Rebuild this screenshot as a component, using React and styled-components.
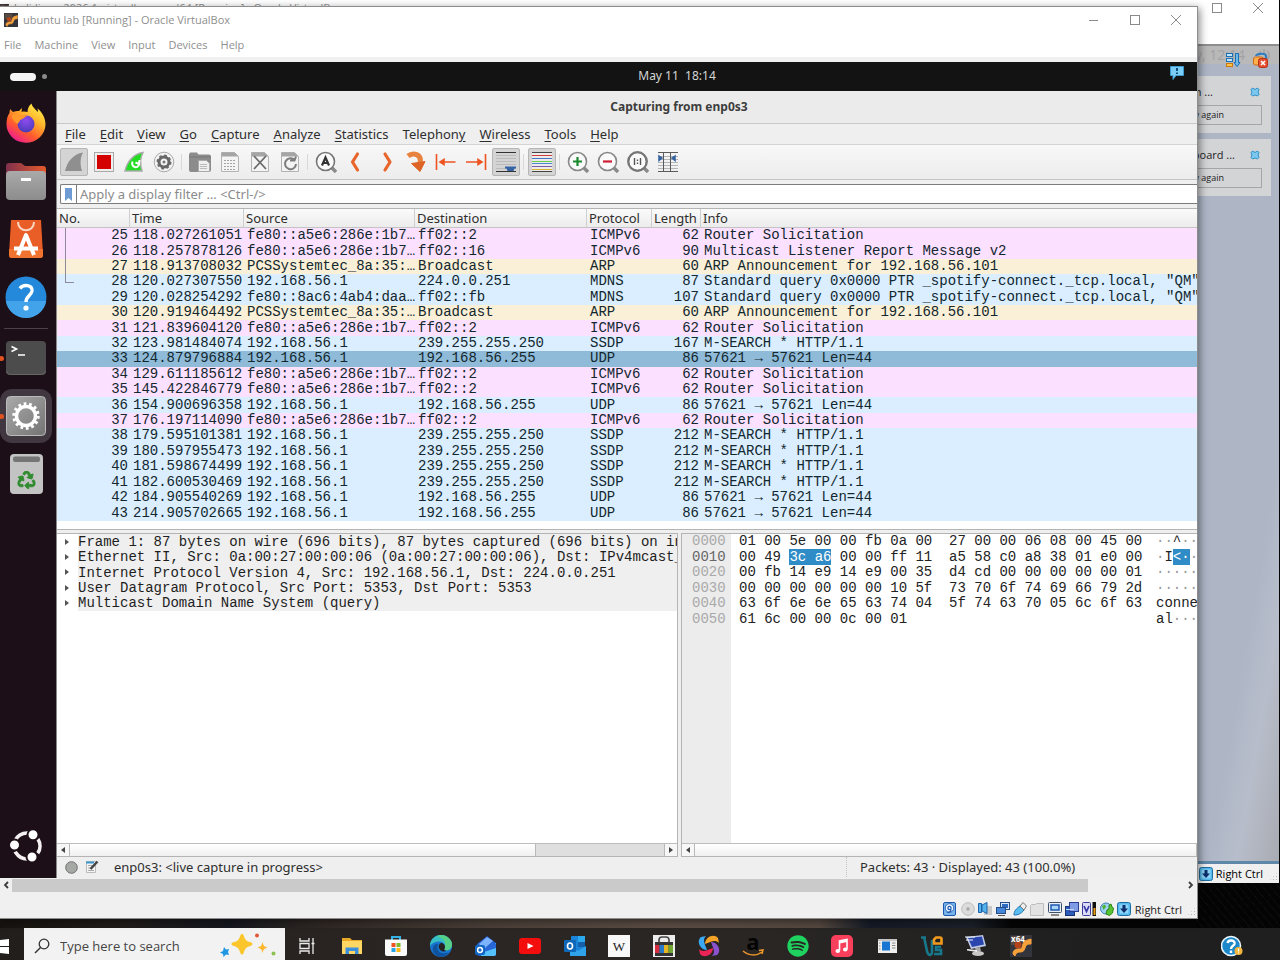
import React, { useState } from "react";
import styled, { createGlobalStyle, css } from "styled-components";
import { FaRecycle, FaSpotify } from "react-icons/fa";

const GlobalStyle = createGlobalStyle`
  * {
    box-sizing: border-box;
  }
  body {
    margin: 0;
    overflow: hidden;
    font-family: "Open Sans", "Noto Sans", sans-serif;
    font-size: 11px;
  }
  button {
    font: inherit;
    color: inherit;
    background: none;
    border: none;
    padding: 0;
    margin: 0;
  }
  svg {
    display: block;
    flex: none;
  }
`;

const ubuntuFont = `"Noto Sans", "Open Sans", sans-serif`;
const mono = css`
  font-family: "Liberation Mono", monospace;
  font-size: 14px;
`;

/* ---------- desktop ---------- */

const Screen = styled.div`
  display: flex;
  flex-direction: column;
  height: 100vh;
  overflow: hidden;
  background: #000;
`;

const Desktop = styled.main`
  position: relative;
  flex: 1;
  min-height: 0;
  background: linear-gradient(
    90deg,
    #17140f 0%,
    #201c1a 10%,
    #14171f 18%,
    #2c2522 24%,
    #4a3f38 38%,
    #5a4c44 52%,
    #54473f 64%,
    #141a26 68%,
    #1b2029 76%,
    #050505 79%,
    #050505 100%
  );
`;

const Stripes = styled.div`
  position: absolute;
  right: 0;
  bottom: 0;
  width: 84px;
  height: 46px;
  background: repeating-linear-gradient(50deg, #040404 0 5px, #0b0b0b 5px 6px);
`;

const Window = styled.section`
  position: absolute;
  display: flex;
  flex-direction: column;
  overflow: hidden;
  background: #f0f0f0;
`;

const BackWindow = styled(Window)`
  inset: 0 1px 45px 0;
`;

const FrontWindow = styled(Window)`
  inset: 7px 83px 10px 0;
  overflow: visible;
  box-shadow: 0 0 0 1px #8d8d8d, 2px 2px 8px 1px rgba(0, 0, 0, 0.45);
`;

const TitleBar = styled.header`
  display: flex;
  align-items: center;
  flex: none;
  height: 26px;
  padding: 0 12px 0 4px;
  gap: 5px;
  background: #fff;
  color: #8f8f8f;
  ${(props) =>
    props.$back &&
    css`
      height: 44px;
      padding: 0 12px 28px 0;
    `}
`;

const WindowTitle = styled.h1`
  flex: 1;
  margin: 0;
  font-size: 11px;
  font-weight: 400;
  line-height: 16px;
  white-space: nowrap;
`;

const WindowButtons = styled.div`
  display: flex;
  gap: 23px;
`;

const VBoxMenu = styled.nav`
  display: flex;
  flex: none;
  height: 24px;
  padding: 0 4px;
  gap: 13px;
  background: #fff;
  color: #8f8f8f;
  button {
    line-height: 24px;
  }
`;

const Ledge = styled.div`
  flex: none;
  height: 5px;
  background: #f0f0f0;
`;

/* ---------- window behind ---------- */

const BackGuest = styled.div`
  flex: 1;
  display: flex;
  flex-direction: column;
  align-items: flex-end;
  gap: 6px;
  border-top: 2px solid #8e8e8e;
  border-bottom: 3px solid #5f88a8;
  background: linear-gradient(
    100deg,
    #aeb6c6 0%,
    #aeb6c6 95%,
    #b7bdca 97%,
    #a9abb2 100%
  );
`;

const BackBar = styled.div`
  display: flex;
  align-items: center;
  justify-content: flex-end;
  width: 100%;
  height: 18px;
  padding-right: 8px;
  gap: 12px;
  background: #b9b9ba;
  color: #a2a2a4;
  font-size: 14px;
  line-height: 16px;
`;

const BackTools = styled.div`
  position: absolute;
  top: 52px;
  right: 11px;
  display: flex;
  gap: 11px;
`;

const Notice = styled.article`
  width: 280px;
  margin: ${(props) => (props.$first ? "6px 8px 0 0" : "0 8px 0 0")};
  padding: 8px 9px 8px 0;
  background: #d3d4d6;
  color: #222;
`;

const NoticeHead = styled.div`
  display: flex;
  justify-content: space-between;
  align-items: flex-start;
  height: 21px;
  padding: 0 2px 0 0;
  line-height: 16px;
  span {
    flex: 1;
    padding-right: ${(props) => props.$gap};
    text-align: right;
  }
  button {
    padding-top: 3px;
  }
`;

const NoticeButton = styled.button`
  display: block;
  width: 100%;
  height: 20px;
  padding-right: 37px;
  border: 1px solid #a6a6a6;
  font-size: 9px;
  line-height: 18px;
  text-align: right;
`;

const BackStatus = styled.footer`
  display: flex;
  align-items: center;
  justify-content: flex-end;
  flex: none;
  height: 19px;
  padding-right: 1px;
  gap: 3px;
  font-size: 11px;
`;

/* ---------- guest shell ---------- */

const Guest = styled.div`
  flex: 1;
  display: flex;
  flex-direction: column;
  min-height: 0;
  font-family: ${ubuntuFont};
`;

const TopPanel = styled.div`
  display: grid;
  grid-template-columns: 1fr auto 1fr;
  flex: none;
  height: 29px;
  padding: 0 13px 0 10px;
  background: #131313;
  color: #d6d6d6;
  font-size: 12px;
  line-height: 27px;
  white-space: pre;
`;

const Clock = styled.time`
  padding-left: 160px;
`;

const Workspaces = styled.div`
  display: flex;
  align-items: center;
  gap: 6px;
  &::before {
    content: "";
    width: 26px;
    height: 8px;
    border-radius: 4px;
    background: #f4f4f4;
  }
  &::after {
    content: "";
    width: 5px;
    height: 5px;
    border-radius: 50%;
    background: #8a8a8a;
  }
`;

const PanelEnd = styled.div`
  display: flex;
  justify-content: flex-end;
  padding-top: 4px;
`;

const Session = styled.div`
  flex: 1;
  display: flex;
  min-height: 0;
`;

const Dock = styled.nav`
  display: flex;
  flex-direction: column;
  flex: none;
  width: 56px;
  padding: 3px 4px 3px 0;
  background: #1c0f17;
`;

const DockRule = styled.hr`
  width: 44px;
  height: 1px;
  margin: 2px auto 0;
  border: none;
  background: #4a4047;
`;

const DockButton = styled.button`
  position: relative;
  display: flex;
  align-items: center;
  justify-content: center;
  height: 54px;
  margin: 2px 0;
  border-radius: 12px;
  background: ${(props) => (props.$active ? "#413740" : "none")};
  ${(props) =>
    props.$running &&
    css`
      &::before {
        content: "";
        position: absolute;
        left: -1px;
        top: 25px;
        width: 5px;
        height: 5px;
        border-radius: 50%;
        background: #e2521f;
      }
    `}
  &:last-child {
    margin-top: auto;
  }
`;

/* ---------- wireshark ---------- */

const Shark = styled.div`
  flex: 1;
  display: flex;
  flex-direction: column;
  min-width: 0;
  border-left: 1px solid #8b888a;
  background: #efefef;
  color: #2e2e2e;
  font-size: 13px;
`;

const SharkTitle = styled.h2`
  flex: none;
  height: 33px;
  margin: 0;
  padding-left: 104px;
  border-bottom: 1px solid #c9c9c9;
  background: #ebebeb;
  color: #3d3d3d;
  font-size: 12px;
  font-weight: 700;
  line-height: 32px;
  text-align: center;
`;

const SharkMenu = styled.nav`
  display: flex;
  flex: none;
  height: 21px;
  padding: 0 8px;
  gap: 14px;
  border-bottom: 1px solid #d4d4d4;
  line-height: 19px;
  u {
    text-underline-offset: 2px;
    text-decoration-thickness: 1px;
  }
`;

const Toolbar = styled.div`
  display: flex;
  align-items: center;
  flex: none;
  gap: 2px;
  height: 35px;
  padding: 0 3px;
  border-bottom: 1px solid #c4c4c4;
  background: linear-gradient(#f8f8f8, #ececec);
`;

const Tool = styled.button`
  display: flex;
  align-items: center;
  justify-content: center;
  width: 28px;
  height: 28px;
  border: 1px solid ${(props) => (props.$on ? "#b5b5b5" : "transparent")};
  border-radius: 2px;
  background: ${(props) => (props.$on ? "#d4d4d4" : "none")};
`;

const ToolGap = styled.span`
  width: 4px;
  height: 16px;
  background: linear-gradient(90deg, transparent 1px, #d8d8d8 1px 2px, transparent 2px);
`;

const FilterRow = styled.div`
  display: flex;
  flex: none;
  height: 28px;
  padding: 4px 0 4px 3px;
`;

const FilterBox = styled.label`
  display: flex;
  align-items: center;
  flex: 1;
  border: 1px solid #7c7c7c;
  border-right: none;
  border-radius: 2px 0 0 2px;
  background: #fff;
  svg {
    margin: 0 4px;
  }
`;

const FilterInput = styled.input`
  flex: 1;
  height: 100%;
  min-width: 0;
  padding: 0 3px;
  border: none;
  border-left: 1px solid #7c7c7c;
  outline: none;
  background: none;
  font-family: ${ubuntuFont};
  font-size: 13px;
  &::placeholder {
    color: #8b8b8b;
    opacity: 1;
  }
`;

const PacketPane = styled.div`
  flex: none;
  padding-bottom: 8px;
  overflow: hidden;
  border-top: 1px solid #b4b4b4;
  border-bottom: 1px solid #b4b4b4;
  background: #fff;
`;

const PacketTable = styled.table`
  width: 100%;
  height: 312px;
  table-layout: fixed;
  border-collapse: separate;
  border-spacing: 0;
`;

const HeadCell = styled.th`
  height: 19px;
  padding: 0 2px;
  border-right: 1px solid #cfcfcf;
  border-bottom: 1px solid #c4c4c4;
  background: linear-gradient(#fbfbfb, #ececec);
  font-size: 13px;
  font-weight: 400;
  line-height: 18px;
  text-align: left;
  white-space: nowrap;
  &:last-child {
    border-right: none;
  }
`;

const rowColors = {
  ICMPv6: "#fce0ff",
  ARP: "#faf0d7",
  MDNS: "#daeeff",
  SSDP: "#daeeff",
  UDP: "#daeeff",
};

const PacketRow = styled.tr`
  background: ${(props) => (props.$selected ? "#8fbbd8" : rowColors[props.$protocol])};
  color: #12272e;
`;

const Cell = styled.td`
  ${mono}
  position: relative;
  padding: 0 2px 0 3px;
  line-height: 15px;
  overflow: hidden;
  text-align: ${(props) => (props.$right ? "right" : "left")};
  white-space: nowrap;
  ${(props) =>
    props.$branch &&
    css`
      &::before {
        content: "";
        position: absolute;
        left: 8px;
        top: 0;
        width: 8px;
        height: ${props.$branch === "end" ? "50%" : "100%"};
        border-left: 1px solid #8d8b98;
        border-bottom: ${props.$branch === "end" ? "1px solid #8d8b98" : "none"};
      }
    `}
`;

const LowerPanes = styled.div`
  flex: 1;
  display: grid;
  grid-template-columns: 621px minmax(0, 1fr);
  gap: 3px;
  min-height: 0;
  margin-top: 3px;
`;

const Pane = styled.div`
  display: flex;
  flex-direction: column;
  min-width: 0;
  overflow: hidden;
  border: 1px solid #b4b4b4;
  border-left-width: ${(props) => (props.$bytes ? "1px" : "0")};
  border-right-width: ${(props) => (props.$bytes ? "0" : "1px")};
  background: #fff;
`;

const Tree = styled.ul`
  ${mono}
  display: grid;
  grid-auto-rows: 1fr;
  flex: none;
  height: 77px;
  margin: 0 0 auto;
  padding: 0;
  list-style: none;
  color: #1e1e1e;
`;

const TreeItem = styled.li`
  display: flex;
  align-items: center;
  min-width: 0;
  overflow: hidden;
  line-height: 16px;
  white-space: nowrap;
  &::before {
    content: "";
    flex: none;
    margin: 0 9px 0 8px;
    border: 3px solid transparent;
    border-left: 4px solid #555;
    border-right: none;
  }
  span {
    flex: 1;
    background: #efefef;
  }
`;

const Bytes = styled.div`
  ${mono}
  flex: 1;
  display: grid;
  grid-template-columns: 49px minmax(0, 1fr);
  background: #fff;
  color: #222;
  line-height: 15px;
`;

const Offsets = styled.div`
  padding-left: 10px;
  background: #ececec;
  color: #a9a9a9;
  b {
    font-weight: 400;
    color: #666;
  }
`;

const Dump = styled.div`
  padding-left: 8px;
  overflow: hidden;
`;

const Lines = styled.div`
  display: grid;
  grid-auto-rows: 1fr;
  height: 93px;
`;

const DumpLine = styled.div`
  display: grid;
  grid-template-columns: 417px auto;
  white-space: pre;
  mark {
    background: #308cc6;
    color: #fff;
  }
  i {
    font-style: normal;
    color: #999;
  }
`;

const PaneScroll = styled.div`
  display: flex;
  flex: none;
  height: 13px;
  border-top: 1px solid #bdbdbd;
  background: #dfdfdf;
`;

const ScrollArrow = styled.button`
  display: flex;
  align-items: center;
  justify-content: center;
  width: 13px;
  background: #f7f7f7;
  border: solid #b9b9b9;
  border-width: ${(props) => (props.$end ? "0 0 0 1px" : "0 1px 0 0")};
  &::before {
    content: "";
    border: 3px solid transparent;
    ${(props) =>
      props.$end
        ? "border-left: 4px solid #444; border-right: none;"
        : "border-right: 4px solid #444; border-left: none;"}
  }
`;

const ScrollThumb = styled.div`
  width: ${(props) => props.$size};
  border-right: 1px solid #b9b9b9;
  background: linear-gradient(#fff, #f0f0f0);
`;

const Spacer = styled.div`
  flex: 1;
`;

const SharkStatus = styled.footer`
  display: grid;
  grid-template-columns: 789px 1fr;
  flex: none;
  height: 21px;
  padding-bottom: 1px;
  font-size: 13px;
  line-height: 19px;
`;

const StatusPart = styled.div`
  display: flex;
  align-items: center;
  padding-left: ${(props) => (props.$counts ? "13px" : "8px")};
  border-left: ${(props) => (props.$counts ? "1px dotted #c4c4c4" : "none")};
  svg {
    margin-right: 7px;
  }
  span {
    margin-left: ${(props) => (props.$counts ? "0" : "8px")};
  }
`;

/* ---------- virtualbox bottom ---------- */

const VBoxScroll = styled.div`
  display: flex;
  align-items: center;
  flex: none;
  height: 15px;
  padding-bottom: 1px;
  button {
    display: flex;
    justify-content: center;
    width: 12px;
  }
`;

const VBoxThumb = styled.div`
  flex: 0 1 1076px;
  height: 13px;
  background: #cacaca;
`;

const VBoxStatus = styled.footer`
  display: flex;
  align-items: center;
  justify-content: flex-end;
  flex: none;
  height: 25px;
  padding: 7px 1px 0 0;
  gap: 2px;
  color: #222;
`;

const IconStrip = styled.div`
  display: grid;
  grid-template-columns: repeat(11, 1fr);
  justify-items: center;
  width: 191px;
`;

const Grip = styled.span`
  align-self: flex-end;
  width: 9px;
  height: 9px;
  margin: 0 0 2px 3px;
  background: radial-gradient(#b5b5b5 1px, transparent 1px) 0 0 / 3px 3px;
  clip-path: polygon(100% 0, 100% 100%, 0 100%);
`;

/* ---------- taskbar ---------- */

const Taskbar = styled.footer`
  display: flex;
  flex: none;
  height: 32px;
  background: linear-gradient(90deg, #221e1c, #2b2623 35%, #292624 60%, #1f1f1f 85%);
`;

const Start = styled.button`
  display: flex;
  align-items: flex-start;
  width: 24px;
  padding-top: 11px;
`;

const Search = styled.label`
  display: flex;
  align-items: center;
  width: 261px;
  padding: 4px 8px 0 10px;
  background: #f2f2f2;
`;

const SearchInput = styled.input`
  flex: 1;
  min-width: 0;
  padding: 0 0 0 10px;
  border: none;
  outline: none;
  background: none;
  font-family: "Open Sans", sans-serif;
  font-size: 13px;
  &::placeholder {
    color: #454545;
    opacity: 1;
  }
`;

const Apps = styled.div`
  display: grid;
  grid-template-columns: repeat(17, 1fr);
  flex: 0 1 758px;
`;

const App = styled.button`
  display: flex;
  justify-content: center;
  padding-top: 7px;
`;

const Tray = styled.div`
  display: flex;
  margin-left: auto;
  padding-right: 37px;
`;

/* ---------- icons ---------- */

const Svg = ({ size = 22, box = 22, children, ...rest }) => (
  <svg width={size} height={size} viewBox={`0 0 ${box} ${box}`} fill="none" {...rest}>
    {children}
  </svg>
);

const VmIcon = ({ size = 14 }) => (
  <Svg size={size}>
    <rect width="22" height="22" fill="#33343c" />
    <path d="M1 1h12v6l-4 3H1z" fill="#5a4a40" />
    <circle cx="8" cy="10" r="3.500" fill="#b4431c" />
    <path d="M3 19c0-5 4-5 7-5s2-5 4-7 4-2 7-3v5c-4 0-5 1-6 4s-2 4-5 4-4 1-5 4z" fill="#f7a13c" stroke="#f7a13c" />
    {size > 14 && <text x="1" y="7" fill="#fff" fontSize="8" fontWeight="700">x64</text>}
  </Svg>
);

const MinIcon = () => (
  <Svg size={18} box={18}><path d="M4 9.500h9" stroke="#8a8a8a" /></Svg>
);
const MaxIcon = () => (
  <Svg size={18} box={18}><rect x="4.500" y="4.500" width="9" height="9" stroke="#8a8a8a" /></Svg>
);
const CloseIcon = () => (
  <Svg size={18} box={18}><path d="M4 4l10 10M14 4L4 14" stroke="#8a8a8a" /></Svg>
);

const CrossMark = () => (
  <Svg size={10} box={10}>
    <path d="M1 2.500L2.500 1 5 2.500 7.500 1 9 2.500 8 5l1 2.500L7.500 9 5 8 2.500 9 1 7.500 2 5z" fill="#7cc8ee" stroke="#2c8fc9" />
  </Svg>
);

const PowerIcon = () => (
  <Svg size={14} box={14}>
    <path d="M4 3a5.200 5.200 0 106 0M7 1v6" stroke="#a2a2a4" strokeWidth="1.500" />
  </Svg>
);

const SortIcon = () => (
  <Svg size={16} box={16}>
    <rect x="1.500" y="1.500" width="6" height="3" fill="#bfe6ff" stroke="#1d6fb4" />
    <rect x="1.500" y="6.500" width="6" height="3" fill="#bfe6ff" stroke="#1d6fb4" />
    <rect x="1.500" y="11.500" width="6" height="3" fill="#ffc24a" stroke="#c77a10" />
    <path d="M10.500 1.500h3v9h1.500l-3 4-3-4h1.500z" fill="#6db9ea" stroke="#1d6fb4" />
  </Svg>
);

const ClearIcon = () => (
  <Svg size={16} box={16}>
    <path d="M4 4c1-3 10-3 10 0v4" stroke="#2b7cc0" strokeWidth="2.200" />
    <rect x="1.500" y="5" width="10" height="8" rx="2" fill="#ffb04d" stroke="#cc6a12" />
    <rect x="6.500" y="6.500" width="9" height="9" rx="2" fill="#e4502f" stroke="#b9311a" />
    <path d="M9 9l4 4M13 9l-4 4" stroke="#fff" strokeWidth="1.600" />
  </Svg>
);

const BubbleIcon = () => (
  <Svg size={14} box={14}>
    <path d="M.5.5h13v9H6l-3 4v-4H.5z" fill="#7ccdf5" stroke="#3b9bd1" />
    <path d="M7 2v3M7 6.500V8" stroke="#0f4c7a" strokeWidth="2" />
  </Svg>
);

const HostKeyIcon = () => (
  <Svg size={14} box={14}>
    <rect x=".5" y=".5" width="13" height="13" rx="2" fill="#54b9ee" stroke="#1f6e9e" />
    <rect x="2.500" y="2.500" width="9" height="9" rx="1" fill="#8bd5fa" />
    <path d="M5.500 3h3v3.500H11L7 11 3 6.500h2.500z" fill="#0d2e6b" />
  </Svg>
);

const Chevron = ({ left }) => (
  <Svg size={8} box={8}>
    <path d={left ? "M6 1L3 4l3 3" : "M2 1l3 3-3 3"} stroke="#3c3c3c" strokeWidth="1.800" />
  </Svg>
);

/* dock */

const Firefox = () => (
  <Svg size={40} box={40}>
    <defs>
      <linearGradient id="ffx" x1="0.850" y1="0.050" x2="0.250" y2="0.950">
        <stop offset="0" stopColor="#fff04a" />
        <stop offset=".35" stopColor="#ffb52c" />
        <stop offset=".7" stopColor="#ff5a2d" />
        <stop offset="1" stopColor="#f0208c" />
      </linearGradient>
      <radialGradient id="ffp" cx=".5" cy=".3" r=".7">
        <stop offset="0" stopColor="#8f4bf0" />
        <stop offset="1" stopColor="#4a3bb8" />
      </radialGradient>
    </defs>
    <path d="M25.500.5c1 4 4.500 6 6 8.500 1-1 0-2.500 0-3.500 5 4 8 10 8 16A19.500 18.500 0 01.5 21c0-5 1-8 3-11l.5-4 3 3c2-1 4-1 6-1l3-3-.5 4c3-1 4 0 6 0 0-4 2-7 4-8.500z" fill="url(#ffx)" />
    <circle cx="20" cy="21" r="8.500" fill="url(#ffp)" />
    <path d="M6 12c3-2 6-1 9 .5 2-.5 4-.5 6 .5-3 1-3 3-7 4 0 2-2 3-3 4-2-3-6-5-5-9z" fill="#ff9a2a" />
  </Svg>
);

const Files = () => (
  <Svg size={42} box={42}>
    <defs>
      <linearGradient id="fld" x1="0" x2="1">
        <stop offset="0" stopColor="#80304d" />
        <stop offset="1" stopColor="#e45b2c" />
      </linearGradient>
      <linearGradient id="fld2" x1="0" x2="0" y1="0" y2="1">
        <stop offset="0" stopColor="#aaa" />
        <stop offset="1" stopColor="#8c8c8c" />
      </linearGradient>
    </defs>
    <path d="M1 6a3 3 0 013-3h12l4 3h18a3 3 0 013 3v10H1z" fill="url(#fld)" />
    <rect x="1" y="11" width="40" height="29" rx="4" fill="url(#fld2)" />
    <path d="M16 19.500h10" stroke="#fff" strokeWidth="3" />
  </Svg>
);

const Software = () => (
  <Svg size={40} box={40}>
    <path d="M5 1h30l2 35a3 3 0 01-3 3H6a3 3 0 01-3-3z" fill="#e95d27" />
    <path d="M3 30h34v6a3 3 0 01-3 3H6a3 3 0 01-3-3z" fill="#f0742f" />
    <path d="M12 3c0 11 16 11 16 0" stroke="#f9d6c4" strokeWidth="2" />
    <path d="M12 36l8-20 8 20" stroke="#fff" strokeWidth="4" strokeLinejoin="round" />
    <path d="M8 29.500h24" stroke="#fff" strokeWidth="4" />
  </Svg>
);

const HelpBall = () => (
  <Svg size={42} box={42}>
    <circle cx="21" cy="21" r="20.500" fill="#2489da" />
    <path d="M.8 25h40.400A20.500 20.500 0 01.8 25z" fill="#43a3ea" />
    <path d="M15 12.500c3-4.500 13-4 12 2.500-1 5-6 5-6 11" stroke="#fff" strokeWidth="3.400" />
    <circle cx="21" cy="32" r="2.600" fill="#fff" />
  </Svg>
);

const Terminal = () => (
  <Svg size={42} box={42}>
    <rect x="1" y="4" width="40" height="34" rx="4" fill="#4c4c4c" />
    <path d="M1.500 34a4 4 0 004 3.500h31a4 4 0 004-3.500" stroke="#666" />
    <path d="M6.500 9.500l5 2.500-5 2.500M13 18h7" stroke="#fff" strokeWidth="1.600" />
  </Svg>
);

const Settings = () => (
  <Svg size={42} box={42}>
    <defs>
      <linearGradient id="set" x1="0" y1="0" x2="1" y2="1">
        <stop offset="0" stopColor="#aaa" />
        <stop offset="1" stopColor="#747474" />
      </linearGradient>
    </defs>
    <rect x="1.500" y="1.500" width="39" height="39" rx="4" fill="url(#set)" stroke="#bbb" />
    <circle cx="21" cy="21" r="9.500" stroke="#fff" strokeWidth="3.400" />
    <circle cx="21" cy="21" r="12" stroke="#fff" strokeWidth="3.400" strokeDasharray="2.700 2.686" />
  </Svg>
);

const Trash = () => (
  <Svg size={42} box={42}>
    <rect x="5" y="1" width="33" height="40" rx="4" fill="#c3c3c3" />
    <rect x="8" y="3.500" width="27" height="5.500" rx="2" fill="#757575" />
    <g transform="translate(12.500 18)" color="#2f8c2f" stroke="#2f8c2f">
      <FaRecycle size={18} strokeWidth={24} />
    </g>
  </Svg>
);

const UbuntuLogo = () => (
  <Svg size={34} box={34}>
    <circle cx="18" cy="17" r="13" stroke="#f4f0f2" strokeWidth="3.600" strokeDasharray="15.200 12.020" transform="rotate(-33 18 17)" />
    <circle cx="24" cy="5.800" r="5.500" fill="#fff" stroke="#1c0f17" strokeWidth="2" />
    <circle cx="5.500" cy="16" r="5.500" fill="#fff" stroke="#1c0f17" strokeWidth="2" />
    <circle cx="23" cy="28" r="5.500" fill="#fff" stroke="#1c0f17" strokeWidth="2" />
  </Svg>
);

/* wireshark toolbar */

const finPath = "M2 20C4 11 10 3 20 1.500c-3 5.500-3 12-1 18.500z";

const Page = ({ children }) => (
  <>
    <path d="M2.500 1.500h13l4 4v15h-17z" fill="#f4f4f4" stroke="#b3b3b3" />
    <path d="M2.500 1.500h13l4 4h-17z" fill="#a5a5a5" />
    {children}
  </>
);

const Lens = ({ ring = "#777", children }) => (
  <>
    <path d="M16 16l5 5" stroke="#8a8a8a" strokeWidth="3.400" />
    <circle cx="10.500" cy="10.500" r="9" fill="#fafafa" stroke={ring} strokeWidth="1.600" />
    {children}
  </>
);

const toolArt = {
  "Start capture": <path d={finPath} fill="#8f8f8f" />,
  "Stop capture": (
    <>
      <rect x="1.500" y="1.500" width="19" height="19" fill="#eee" stroke="#a9a9a9" />
      <rect x="4" y="4" width="14" height="14" fill="#d40000" />
    </>
  ),
  "Restart capture": (
    <>
      <path d={finPath} fill="#22dd22" stroke="#a8aca8" strokeWidth="1.500" />
      <path d="M9.500 10.500c-2 6 6 8 6.500 2.500M16.500 9l-.5 4-3.500-1.500" stroke="#fff" strokeWidth="2" />
    </>
  ),
  "Capture options": (
    <>
      <circle cx="11" cy="11" r="9.800" fill="#f3f3f3" stroke="#aaa" />
      <circle cx="11" cy="11" r="5" stroke="#666" strokeWidth="3" />
      <circle cx="11" cy="11" r="6.800" stroke="#666" strokeWidth="1.400" strokeDasharray="2.670 2.670" />
      <circle cx="11" cy="11" r="1.500" fill="#777" />
    </>
  ),
  Open: (
    <>
      <path d="M0 3.500l1-2h7l1.500 2H20a2 2 0 012 2V19a2 2 0 01-2 2H2a2 2 0 01-2-2z" fill="#8c8c8c" />
      <path d="M0 6h22" stroke="#777" />
      <path d="M9.500 9.500h8l3 3v8h-11z" fill="#f0f0f0" stroke="#aaa" />
      <path d="M11 13.500h7M11 15.500h7M11 17.500h7" stroke="#bbb" />
    </>
  ),
  Save: (
    <Page>
      <path d="M5 9.500h12M5 12.500h12M5 15.500h12M5 18.500h12" stroke="#a4a4a4" strokeDasharray="2 1" />
    </Page>
  ),
  Close: (
    <Page>
      <path d="M5 5l12 13M17 5L5 18" stroke="#6b6b6b" strokeWidth="1.800" />
    </Page>
  ),
  Reload: (
    <Page>
      <path d="M15.500 9A5.500 5.500 0 1017 13M17 5.500l-1.500 4H11" stroke="#7d7d7d" strokeWidth="2" />
    </Page>
  ),
  "Find packet": (
    <Lens>
      <path d="M7 14.500L10.500 6.500l3.500 8M8 12h5" stroke="#333" strokeWidth="2.200" />
    </Lens>
  ),
  "Previous packet": <path d="M12.500 3L7.500 11l5 8" stroke="#e8662c" strokeWidth="3.200" strokeLinecap="round" strokeLinejoin="round" />,
  "Next packet": <path d="M10 3l5 8-5 8" stroke="#e8662c" strokeWidth="3.200" strokeLinecap="round" strokeLinejoin="round" />,
  "Go to packet": (
    <>
      <path d="M3 5C8 1 17 3 15 12" stroke="#e8833f" strokeWidth="5" />
      <path d="M6.500 12.500L20 10.500 15 20.500z" fill="#dd6424" stroke="#dd6424" strokeLinejoin="round" />
    </>
  ),
  "First packet": (
    <path d="M1.500 3v16M20.500 11H5M9 8.500L5 11l4 2.500z" stroke="#ee5322" strokeWidth="1.600" fill="#ee5322" />
  ),
  "Last packet": (
    <path d="M20.500 3v16M1 11h16M13 8.500l4 2.500-4 2.500z" stroke="#ee5322" strokeWidth="1.600" fill="#ee5322" />
  ),
  "Auto scroll": (
    <>
      <path d="M1 4.500h20M1 7.500h20M1 10.500h20M1 13.500h20M1 17.500h20" stroke="#bbb" />
      <path d="M1 1.500h20M1 20.500h20" stroke="#333" />
      <path d="M10 15.500h11v2h-1.500l-1 2.500h-6l-1-2.500H10z" fill="#3563a3" />
    </>
  ),
  "Colorize packets": (
    <>
      <rect x="1" y="1" width="20" height="20" fill="#ececec" />
      <path d="M1 1.500h20M1 20.500h20" stroke="#444" />
      <path d="M1 4.500h20" stroke="#d33b3b" />
      <path d="M1 7.500h20" stroke="#4472c4" />
      <path d="M1 10.500h20" stroke="#6bc94a" />
      <path d="M1 12.500h20" stroke="#4a8ad0" />
      <path d="M1 15.500h20" stroke="#7d5aa8" />
      <path d="M1 18.500h20" stroke="#d9b32e" />
    </>
  ),
  "Zoom in": (
    <Lens ring="#888">
      <path d="M10.500 6v9M6 10.500h9" stroke="#1a8a2d" strokeWidth="2.200" />
    </Lens>
  ),
  "Zoom out": (
    <Lens ring="#888">
      <path d="M6 10.500h9" stroke="#cf1f35" strokeWidth="2.200" />
    </Lens>
  ),
  "Normal size": (
    <Lens ring="#666">
      <circle cx="10.500" cy="10.500" r="9.400" stroke="#777" strokeWidth="2" />
      <path d="M7.500 7v7M13.500 7v7M10.500 8.500v1.500M10.500 11.500V13" stroke="#555" strokeWidth="1.400" />
    </Lens>
  ),
  "Resize columns": (
    <>
      <path d="M1 5.500h20M1 8.500h20M1 11.500h20M1 14.500h20M1 17.500h20" stroke="#b5b5b5" />
      <path d="M1 1.500h20M1 20.500h20M6.500 1.500v19M13.500 1.500v19" stroke="#5a5a5a" />
      <path d="M2 5l3 2-3 2.500zM18 5l-3 2 3 2.500z" fill="#3563a3" stroke="#3563a3" strokeWidth="1.500" />
    </>
  ),
};

const toolGroups = [
  ["Start capture", "Stop capture", "Restart capture", "Capture options"],
  ["Open", "Save", "Close", "Reload"],
  ["Find packet", "Previous packet", "Next packet", "Go to packet", "First packet", "Last packet", "Auto scroll"],
  ["Colorize packets"],
  ["Zoom in", "Zoom out", "Normal size", "Resize columns"],
];
const pressed = ["Start capture", "Auto scroll", "Colorize packets"];

/* virtualbox status strip, all on a 14 grid */

const stripArt = {
  "Hard disks": (
    <>
      <rect x=".5" y=".5" width="12" height="13" rx="1.500" fill="#78b4ea" stroke="#1b58b0" />
      <circle cx="6.500" cy="6" r="4.300" fill="#e8f4ff" stroke="#2c66bb" />
      <circle cx="6.500" cy="6" r="1.600" stroke="#1b58b0" strokeWidth="1.200" />
      <path d="M8 7.500c0 2-2 3-4 3" stroke="#1b58b0" strokeWidth="1.200" />
    </>
  ),
  "Optical drives": (
    <>
      <circle cx="7" cy="7" r="6.300" fill="#dcdcdc" stroke="#bcbcbc" />
      <circle cx="7" cy="7" r="1.800" fill="#aaa" />
    </>
  ),
  Audio: (
    <>
      <rect x="6" y="4" width="8" height="9" fill="#c9c9c9" />
      <path d="M.5 1.500h3v9h-3zM4 3l5-2.500v11L4 9z" fill="#55b2ea" stroke="#1c62ac" />
    </>
  ),
  Network: (
    <>
      <rect x="4.500" y=".5" width="9" height="7" fill="#d7e7f7" stroke="#254d86" />
      <rect x="6" y="2" width="6" height="4" fill="#2f6ac2" />
      <rect x=".5" y="5.500" width="9" height="6" fill="#4686d8" stroke="#254d86" />
      <path d="M2 13.500h7" stroke="#555" />
    </>
  ),
  USB: (
    <>
      <path d="M1 13c0-4 2-6 6-9l4 4c-3 4-6 5-10 5z" fill="#5bbcf0" stroke="#1c6fb0" />
      <path d="M7 4l3-3.500 3.500 3.500L11 8z" fill="#eee" stroke="#777" />
    </>
  ),
  "Shared folders": <path d="M.5 3.500l1-1h4l1-1h7v12H.5z" fill="#e2e2e2" stroke="#bdbdbd" />,
  Display: (
    <>
      <rect x=".5" y=".5" width="13" height="10" rx="1" fill="#e9eff6" stroke="#3c4f68" />
      <rect x="3" y="3" width="8" height="5" fill="#a9d7fa" stroke="#1d57b0" strokeWidth="1.500" />
      <path d="M3 13h8" stroke="#666" strokeWidth="1.500" />
    </>
  ),
  Recording: (
    <>
      <rect x=".5" y="4.500" width="9" height="9" fill="#2b5cba" stroke="#17336f" />
      <rect x="4.500" y=".5" width="9" height="9" fill="#7f9be6" stroke="#2a3f94" />
      <path d="M1 7.500h8" stroke="#bdd6ff" />
    </>
  ),
  Features: (
    <>
      <rect x=".5" y=".5" width="8" height="13" rx="1" fill="#dcdcf8" stroke="#3b3b9b" />
      <path d="M2 4l2.500 5.500L7 4" stroke="#3434a5" strokeWidth="1.700" />
      <rect x="10.500" width="3.500" height="14" fill="#111" />
      <rect x="11.500" y="6" width="2" height="7" fill="#e79a11" />
    </>
  ),
  Mouse: (
    <>
      <circle cx="6" cy="6.500" r="5.500" fill="#9fd0f5" stroke="#3d7db5" />
      <path d="M2 4l3-1.500L6 5 3.500 8z" fill="#4cb52c" />
      <path d="M9 3l2-1 1 3 1.500 1-1 5-3 2.500L6 12l1-4 2-1z" fill="#58c433" stroke="#2c8517" />
    </>
  ),
};

/* taskbar, 22 grid */

const appArt = {
  "Task view": (
    <path d="M4 3v3h9V3M4 19v-3h9v3M4 8.500h9v5H4zM17 3v16M15.500 8.500h3" stroke="#ececec" strokeWidth="1.300" />
  ),
  "File Explorer": (
    <>
      <path d="M1 3h8l2 2h10v14H1z" fill="#e9a827" />
      <path d="M1 6h20v13H1z" fill="#fdd663" />
      <path d="M4.500 19v-6.500h13V19H14v-3H8v3z" fill="#3d8fdc" />
    </>
  ),
  Store: (
    <>
      <path d="M7 5V2h8v3" stroke="#35b3e6" strokeWidth="2" />
      <path d="M0 4.500h22V19a2 2 0 01-2 2H2a2 2 0 01-2-2z" fill="#fafafa" />
      <path d="M6.500 8h4v4h-4z" fill="#ee5126" />
      <path d="M11.500 8h4v4h-4z" fill="#7dba2e" />
      <path d="M6.500 13h4v4h-4z" fill="#2aa2e3" />
      <path d="M11.500 13h4v4h-4z" fill="#fdb813" />
    </>
  ),
  Edge: (
    <>
      <circle cx="11" cy="11" r="11" fill="#1874cc" />
      <path d="M0 11C0 4 5 0 11 0s11 5 11 9.500-4 6.500-7 5.500c-2-1 0-2 0-4s-2-4.500-6-4.500S2 8 0 11z" fill="#38bfc4" />
      <path d="M11 0c6 0 11 5 11 9.500s-4 6.500-7 5.500c-2-1 0-2 0-4 1-5-3-9-8-9.500C8 .5 9 0 11 0z" fill="#56cf87" />
      <path d="M8 9c-3 7 4 12 11 8-4 7-14 6-16-1-1-4 1-7 5-7z" fill="#0f529e" />
      <path d="M12 8c-2 0-4 2-3 5 1 3 4 4 7 3-3-1-1-2-1-4s-1-3-3-4z" fill="#262321" />
    </>
  ),
  "Outlook new": (
    <>
      <path d="M2 9L12 1l9 7v11a2 2 0 01-2 2H4a2 2 0 01-2-2z" fill="#2459c4" />
      <path d="M4 9l8-7 6 4-9 8z" fill="#7db4ff" />
      <path d="M6 15L21 8v11a2 2 0 01-2 2H6z" fill="#54c1fb" />
      <path d="M9 14l9-7 3 2v4l-12 4z" fill="#2867d8" />
      <rect y="10" width="10" height="10" rx="2" fill="#1267c4" />
      <circle cx="5" cy="15" r="2.400" stroke="#fff" strokeWidth="1.500" />
    </>
  ),
  YouTube: (
    <>
      <rect y="3" width="22" height="16" rx="3" fill="#f30d0d" />
      <path d="M8.500 8v6l6-3z" fill="#fff" />
    </>
  ),
  Outlook: (
    <>
      <rect x="7" y="1" width="14" height="18" rx="1" fill="#1c84d8" />
      <path d="M14 1h7v6h-7z" fill="#2ca9ee" />
      <path d="M14 7h7v5h-7z" fill="#1560a8" />
      <path d="M6 12l8 4 8-5v10H6z" fill="#2fa4ea" />
      <rect y="5" width="12" height="12" rx="1" fill="#0f67b7" />
      <ellipse cx="6" cy="11" rx="2.500" ry="3" stroke="#fff" strokeWidth="1.600" />
    </>
  ),
  Wikipedia: (
    <>
      <rect width="22" height="22" fill="#f8f8f8" />
      <text x="11" y="16" textAnchor="middle" fontFamily="Liberation Serif, serif" fontSize="13" fill="#222">W</text>
    </>
  ),
  Shopping: (
    <>
      <rect width="22" height="22" fill="#ececec" />
      <path d="M6 8V5q0-3 3-3h4q3 0 3 3v3" stroke="#444" strokeWidth="1.600" />
      <path d="M2 7h18v14H2z" fill="#333" />
      <path d="M2 10h4.500v8H2z" fill="#d62e3f" />
      <path d="M6.500 10H11v8H6.500z" fill="#2979c9" />
      <path d="M11 10h4.500v8H11z" fill="#e8b522" />
      <path d="M15.500 10H20v8h-4.500z" fill="#71a834" />
    </>
  ),
  Photos: (
    <>
      <path d="M9 15C2 15-2 6 3 2l5-1C4 5 7 9 9 15z" fill="#3aa8f5" />
      <path d="M7 9C7 2 16-2 20 3l1 5c-4-4-8-1-14 1z" fill="#f4a228" />
      <path d="M13 7c7 0 11 9 6 13l-5 1c4-4 1-8-1-14z" fill="#8a52cf" />
      <path d="M15 13c0 7-9 11-13 6l-1-5c4 4 8 1 14-1z" fill="#ea2457" />
      <circle cx="11" cy="11" r="3" fill="#292522" />
    </>
  ),
  Amazon: (
    <>
      <text x="11" y="15" textAnchor="middle" fontFamily="Open Sans, sans-serif" fontWeight="700" fontSize="22" fill="#050505">a</text>
      <path d="M1 16c6 5 14 5 19 1M17 15.500l4-.5-1 4" stroke="#ec962a" strokeWidth="1.500" />
    </>
  ),
  Music: (
    <>
      <rect width="22" height="22" rx="5" fill="#f8405c" />
      <path d="M8.500 15.500V6L16 4.500V14" stroke="#fff" strokeWidth="1.600" />
      <path d="M8.500 7.500L16 6" stroke="#fff" strokeWidth="2" />
      <ellipse cx="6.800" cy="16" rx="2.300" ry="2" fill="#fff" />
      <ellipse cx="14.300" cy="14.500" rx="2.300" ry="2" fill="#fff" />
    </>
  ),
  News: (
    <>
      <rect x="2" y="4" width="19" height="14" fill="#efefef" />
      <path d="M2 5h19" stroke="#999" />
      <rect x="6" y="6.500" width="8" height="9" fill="#1976d2" />
      <path d="M16 8h3.500M16 10.500h3.500M16 13h3.500M3 8h1.500M3 11h1.500M3 14h1.500" stroke="#888" />
    </>
  ),
  VirtualBox: (
    <>
      <path d="M0 2.500h5M3 2l3 14c1 5 5 5 5 1V5" stroke="#17788d" strokeWidth="2.600" />
      <path d="M20 12h-5v3h5v4h-7" stroke="#17788d" strokeWidth="2.600" />
      <path d="M13 8.500v-4l2-2h4q1.500 0 1.500 1.500v4.500z" stroke="#f29a1d" strokeWidth="2.600" />
    </>
  ),
  "Remote desktop": (
    <>
      <path d="M1 2l17-2 3 11-15 3z" fill="#bfcbe5" />
      <path d="M3 3l14-1.500 2 8L7 12z" fill="#2a45ae" />
      <path d="M0 2h10M1 5h7" stroke="#f3f6ff" />
      <path d="M10 13l5-1 1 4-5 1z" fill="#aaa" />
      <ellipse cx="13" cy="18.500" rx="6" ry="2.500" fill="#c8c8c8" />
      <path d="M2 14l10 1v2L2 15.500z" fill="#ececec" />
    </>
  ),
};

const apps = [
  "Task view", "File Explorer", "Store", "Edge", "Outlook new", "YouTube", "Outlook", "Wikipedia",
  "Shopping", "Photos", "Amazon", "Spotify", "Music", "News", "VirtualBox", "Remote desktop", "ubuntu lab",
];

const appIcon = (name) => {
  if (name === "Spotify") return <FaSpotify size={22} color="#1fd15f" />;
  if (name === "ubuntu lab") return <VmIcon size={22} />;
  return <Svg>{appArt[name]}</Svg>;
};

const Sparkles = () => (
  <svg width="58" height="26" viewBox="0 0 58 26">
    <path d="M23 2.500c2 6 3 7 9 8.500-6 2-7 3-9 9-2-6-3-7-9-9 6-1.500 7-2.500 9-8.500z" fill="#fbc62c" stroke="#fbc62c" strokeWidth="3" strokeLinejoin="round" />
    <path d="M43.500 9c1 4 1.500 4.500 5.500 5.500-4 1-4.500 1.500-5.500 5.500-1-4-1.500-4.500-5.500-5.500 4-1 4.500-1.500 5.500-5.500z" fill="#fbb62c" />
    <path d="M5 14l2 2.500 3-.5-1 3 1 3-3-.5L4.500 24 4 21l-3-1.500 3-1.500z" fill="#2196e3" />
    <circle cx="38" cy="2.500" r="2" fill="#e2563a" />
    <circle cx="54.500" cy="20.500" r="2" fill="#8cc152" />
  </svg>
);

/* ---------- data ---------- */

const v6 = "fe80::a5e6:286e:1b7…";
const pcs = "PCSSystemtec_8a:35:…";
const vm = "192.168.56.1";
const mdns = 'Standard query 0x0000 PTR _spotify-connect._tcp.local, "QM" q';
const arp = "ARP Announcement for 192.168.56.101";
const udp = "57621 → 57621 Len=44";
const ssdp = "M-SEARCH * HTTP/1.1";

const packets = [
  [25, "118.027261051", v6, "ff02::2", "ICMPv6", 62, "Router Solicitation"],
  [26, "118.257878126", v6, "ff02::16", "ICMPv6", 90, "Multicast Listener Report Message v2"],
  [27, "118.913708032", pcs, "Broadcast", "ARP", 60, arp],
  [28, "120.027307550", vm, "224.0.0.251", "MDNS", 87, mdns],
  [29, "120.028254292", "fe80::8ac6:4ab4:daa…", "ff02::fb", "MDNS", 107, mdns],
  [30, "120.919464492", pcs, "Broadcast", "ARP", 60, arp],
  [31, "121.839604120", v6, "ff02::2", "ICMPv6", 62, "Router Solicitation"],
  [32, "123.981484074", vm, "239.255.255.250", "SSDP", 167, ssdp],
  [33, "124.879796884", vm, "192.168.56.255", "UDP", 86, udp],
  [34, "129.611185612", v6, "ff02::2", "ICMPv6", 62, "Router Solicitation"],
  [35, "145.422846779", v6, "ff02::2", "ICMPv6", 62, "Router Solicitation"],
  [36, "154.900696358", vm, "192.168.56.255", "UDP", 86, udp],
  [37, "176.197114090", v6, "ff02::2", "ICMPv6", 62, "Router Solicitation"],
  [38, "179.595101381", vm, "239.255.255.250", "SSDP", 212, ssdp],
  [39, "180.597955473", vm, "239.255.255.250", "SSDP", 212, ssdp],
  [40, "181.598674499", vm, "239.255.255.250", "SSDP", 212, ssdp],
  [41, "182.600530469", vm, "239.255.255.250", "SSDP", 212, ssdp],
  [42, "184.905540269", vm, "192.168.56.255", "UDP", 86, udp],
  [43, "214.905702665", vm, "192.168.56.255", "UDP", 86, udp],
];

const branches = { 25: "line", 26: "line", 27: "line", 28: "end" };

const tree = [
  "Frame 1: 87 bytes on wire (696 bits), 87 bytes captured (696 bits) on inte",
  "Ethernet II, Src: 0a:00:27:00:00:06 (0a:00:27:00:00:06), Dst: IPv4mcast_fb",
  "Internet Protocol Version 4, Src: 192.168.56.1, Dst: 224.0.0.251",
  "User Datagram Protocol, Src Port: 5353, Dst Port: 5353",
  "Multicast Domain Name System (query)",
];

const dots = (text) => <i>{text}</i>;

const dump = [
  ["0000", "01 00 5e 00 00 fb 0a 00  27 00 00 06 08 00 45 00", <>{dots("··")}^{dots("··")}</>],
  ["0010", <>00 49 <mark>3c a6</mark> 00 00 ff 11  a5 58 c0 a8 38 01 e0 00</>, <>{dots("·")}I<mark>&lt;·</mark>{dots("·")}</>],
  ["0020", "00 fb 14 e9 14 e9 00 35  d4 cd 00 00 00 00 00 01", dots("·····")],
  ["0030", "00 00 00 00 00 00 10 5f  73 70 6f 74 69 66 79 2d", dots("·····")],
  ["0040", "63 6f 6e 6e 65 63 74 04  5f 74 63 70 05 6c 6f 63", "conne"],
  ["0050", "61 6c 00 00 0c 00 01", <>al{dots("···")}</>],
];

/* label and the index of its underlined letter */
const menus = [
  ["File", 0], ["Edit", 0], ["View", 0], ["Go", 0], ["Capture", 0], ["Analyze", 0],
  ["Statistics", 0], ["Telephony", 8], ["Wireless", 0], ["Tools", 0], ["Help", 0],
];

const VirtualBoxDesktop = () => {
  const [selected, setSelected] = useState(33);
  const [filter, setFilter] = useState("");

  return (
    <Screen>
      <GlobalStyle />
      <Desktop>
        <Stripes />
        <BackWindow>
          <TitleBar $back>
            <VmIcon size={9} />
            <WindowTitle>kali-linux-2026.1-virtualbox-amd64 [Running] - Oracle VirtualBox</WindowTitle>
            <WindowButtons>
              <button aria-label="Maximize"><MaxIcon /></button>
              <button aria-label="Close"><CloseIcon /></button>
            </WindowButtons>
          </TitleBar>
          <BackGuest>
            <BackBar>
              <span>May, 12:14</span>
              <PowerIcon />
            </BackBar>
            <Notice $first>
              <NoticeHead $gap="37px">
                <span>Auto capture keyboard is on ...</span>
                <button aria-label="Dismiss"><CrossMark /></button>
              </NoticeHead>
              <NoticeButton>Do not show again</NoticeButton>
            </Notice>
            <Notice>
              <NoticeHead $gap="15px">
                <span>Mouse integration, keyboard ...</span>
                <button aria-label="Dismiss"><CrossMark /></button>
              </NoticeHead>
              <NoticeButton>Do not show again</NoticeButton>
            </Notice>
          </BackGuest>
          <BackTools>
            <SortIcon />
            <ClearIcon />
          </BackTools>
          <BackStatus>
            <HostKeyIcon />
            Right Ctrl
            <Grip />
          </BackStatus>
        </BackWindow>

        <FrontWindow>
          <TitleBar>
            <VmIcon />
            <WindowTitle>ubuntu lab [Running] - Oracle VirtualBox</WindowTitle>
            <WindowButtons>
              <button aria-label="Minimize"><MinIcon /></button>
              <button aria-label="Maximize"><MaxIcon /></button>
              <button aria-label="Close"><CloseIcon /></button>
            </WindowButtons>
          </TitleBar>
          <VBoxMenu>
            {["File", "Machine", "View", "Input", "Devices", "Help"].map((item) => (
              <button key={item}>{item}</button>
            ))}
          </VBoxMenu>
          <Ledge />

          <Guest>
            <TopPanel>
              <Workspaces />
              <Clock>May 11  18:14</Clock>
              <PanelEnd><BubbleIcon /></PanelEnd>
            </TopPanel>
            <Session>
              <Dock>
                <DockButton aria-label="Firefox"><Firefox /></DockButton>
                <DockButton aria-label="Files"><Files /></DockButton>
                <DockButton aria-label="App Center"><Software /></DockButton>
                <DockButton aria-label="Help"><HelpBall /></DockButton>
                <DockRule />
                <DockButton aria-label="Terminal" $running><Terminal /></DockButton>
                <DockButton aria-label="Settings" $running $active><Settings /></DockButton>
                <DockButton aria-label="Trash"><Trash /></DockButton>
                <DockButton aria-label="Show apps"><UbuntuLogo /></DockButton>
              </Dock>

              <Shark>
                <SharkTitle>Capturing from enp0s3</SharkTitle>
                <SharkMenu>
                  {menus.map(([label, key]) => (
                    <button key={label}>
                      {label.slice(0, key)}
                      <u>{label[key]}</u>
                      {label.slice(key + 1)}
                    </button>
                  ))}
                </SharkMenu>
                <Toolbar>
                  {toolGroups.map((group, i) => (
                    <React.Fragment key={group[0]}>
                      {i > 0 && <ToolGap />}
                      {group.map((name) => (
                        <Tool key={name} aria-label={name} $on={pressed.includes(name)}>
                          <Svg>{toolArt[name]}</Svg>
                        </Tool>
                      ))}
                    </React.Fragment>
                  ))}
                </Toolbar>
                <FilterRow>
                  <FilterBox>
                    <svg width="7" height="13" viewBox="0 0 7 13">
                      <path d="M0 0h7v13L3.500 10 0 13z" fill="#6e9bd3" />
                    </svg>
                    <FilterInput
                      aria-label="Display filter"
                      placeholder="Apply a display filter … <Ctrl-/>"
                      value={filter}
                      onChange={(e) => setFilter(e.target.value)}
                    />
                  </FilterBox>
                </FilterRow>

                <PacketPane>
                  <PacketTable>
                    <colgroup>
                      <col width="73" />
                      <col width="114" />
                      <col width="171" />
                      <col width="172" />
                      <col width="65" />
                      <col width="49" />
                      <col />
                    </colgroup>
                    <thead>
                      <tr>
                        {["No.", "Time", "Source", "Destination", "Protocol", "Length", "Info"].map((name) => (
                          <HeadCell key={name}>{name}</HeadCell>
                        ))}
                      </tr>
                    </thead>
                    <tbody>
                      {packets.map(([no, time, source, destination, protocol, length, info]) => (
                        <PacketRow
                          key={no}
                          $protocol={protocol}
                          $selected={no === selected}
                          onClick={() => setSelected(no)}
                        >
                          <Cell $right $branch={branches[no]}>{no}</Cell>
                          <Cell>{time}</Cell>
                          <Cell>{source}</Cell>
                          <Cell>{destination}</Cell>
                          <Cell>{protocol}</Cell>
                          <Cell $right>{length}</Cell>
                          <Cell>{info}</Cell>
                        </PacketRow>
                      ))}
                    </tbody>
                  </PacketTable>
                </PacketPane>

                <LowerPanes>
                  <Pane>
                    <Tree>
                      {tree.map((line) => (
                        <TreeItem key={line}><span>{line}</span></TreeItem>
                      ))}
                    </Tree>
                    <PaneScroll>
                      <ScrollArrow aria-label="Scroll left" />
                      <ScrollThumb $size="466px" />
                      <Spacer />
                      <ScrollArrow $end aria-label="Scroll right" />
                    </PaneScroll>
                  </Pane>
                  <Pane $bytes>
                    <Bytes>
                      <Offsets>
                        <Lines>
                          {dump.map(([offset], i) => (
                            <span key={offset}>{i === 1 ? <b>{offset}</b> : offset}</span>
                          ))}
                        </Lines>
                      </Offsets>
                      <Dump>
                        <Lines>
                          {dump.map(([offset, hex, ascii]) => (
                            <DumpLine key={offset}>
                              <span>{hex}</span>
                              <span>{ascii}</span>
                            </DumpLine>
                          ))}
                        </Lines>
                      </Dump>
                    </Bytes>
                    <PaneScroll>
                      <ScrollArrow aria-label="Scroll left" />
                      <ScrollThumb $size="100%" />
                    </PaneScroll>
                  </Pane>
                </LowerPanes>

                <SharkStatus>
                  <StatusPart>
                    <Svg size={13} box={13}>
                      <circle cx="6.500" cy="6.500" r="5.800" fill="#a5a8a5" stroke="#6f716f" />
                    </Svg>
                    <Svg size={14} box={14}>
                      <path d="M1.500 1.500h9v11h-9z" fill="#f4f4f4" stroke="#bbb" />
                      <path d="M1 2.500h8" stroke="#3b98cf" strokeWidth="2" />
                      <path d="M3 5.500h4M3 8h4M3 10.500h6" stroke="#aaa" />
                      <path d="M12.500 1.500L5.500 9" stroke="#444" strokeWidth="2.500" />
                    </Svg>
                    <span>enp0s3: &lt;live capture in progress&gt;</span>
                  </StatusPart>
                  <StatusPart $counts>
                    <span>Packets: 43 · Displayed: 43 (100.0%)</span>
                  </StatusPart>
                </SharkStatus>
              </Shark>
            </Session>
          </Guest>

          <VBoxScroll>
            <button aria-label="Scroll left"><Chevron left /></button>
            <VBoxThumb />
            <Spacer />
            <button aria-label="Scroll right"><Chevron /></button>
          </VBoxScroll>
          <VBoxStatus>
            <IconStrip>
              {Object.keys(stripArt).map((name) => (
                <Svg key={name} size={14} box={14} aria-label={name}>{stripArt[name]}</Svg>
              ))}
              <HostKeyIcon />
            </IconStrip>
            Right Ctrl
            <Grip />
          </VBoxStatus>
        </FrontWindow>
      </Desktop>

      <Taskbar>
        <Start aria-label="Start">
          <svg width="9" height="15" viewBox="0 0 9 15">
            <path d="M0 1l9-1v7H0zM0 8h9v7l-9-1z" fill="#fff" />
          </svg>
        </Start>
        <Search>
          <Svg size={16} box={16}>
            <circle cx="10" cy="6" r="4.800" stroke="#333" strokeWidth="1.300" />
            <path d="M6.500 9.500L1 15" stroke="#333" strokeWidth="1.500" />
          </Svg>
          <SearchInput aria-label="Search" placeholder="Type here to search" />
          <Sparkles />
        </Search>
        <Apps>
          {apps.map((name) => (
            <App key={name} aria-label={name}>{appIcon(name)}</App>
          ))}
        </Apps>
        <Tray>
          <App aria-label="Get help">
            <Svg>
              <circle cx="10" cy="11" r="9.500" fill="#1c87c9" stroke="#eaf6fd" strokeWidth="1.600" />
              <path d="M6.500 8c1-4 8-3 7 1-.6 2-3.500 2-3.500 5M10 15.500V18" stroke="#fff" strokeWidth="2.400" />
              <circle cx="17.500" cy="16" r="4" fill="#f3b63a" />
              <path d="M17.500 13.500v3M17.500 17.500v1" stroke="#fff" strokeWidth="1.300" />
            </Svg>
          </App>
        </Tray>
      </Taskbar>
    </Screen>
  );
};

export default VirtualBoxDesktop;
